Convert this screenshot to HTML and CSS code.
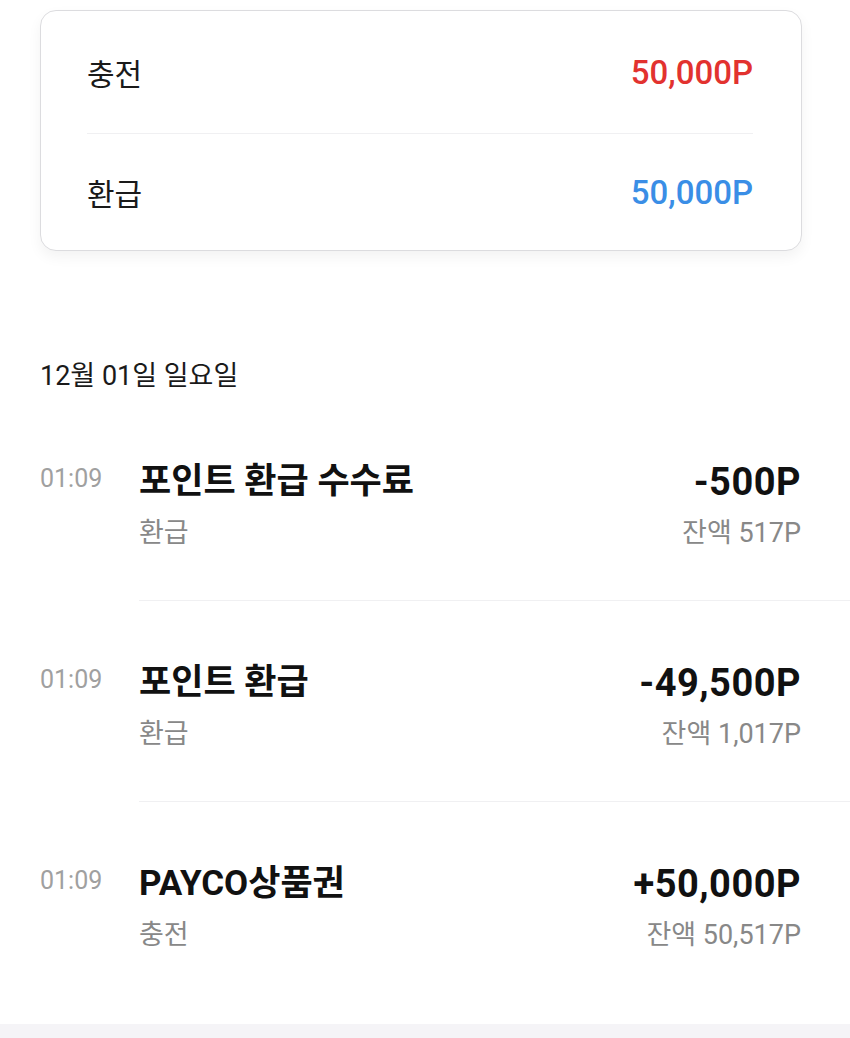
FILE: index.html
```html
<!DOCTYPE html>
<html lang="ko">
<head>
    <meta charset="UTF-8">
    <meta name="viewport" content="width=device-width, initial-scale=1.0">
    <title>포인트 내역</title>
    <link rel="stylesheet" href="styles.css">
</head>
<body>
    <div class="summary-card">
        <div class="summary-row">
            <span class="summary-label">충전</span>
            <span class="summary-amount charge">50,000P</span>
        </div>
        <div class="summary-row">
            <span class="summary-label">환급</span>
            <span class="summary-amount refund">50,000P</span>
        </div>
    </div>

    <div class="history">
        <h2 class="history-date">12월 01일 일요일</h2>

        <div class="history-item">
            <div class="item-time">01:09</div>
            <div class="item-body">
                <div class="item-info">
                    <div class="item-title">포인트 환급 수수료</div>
                    <div class="item-type">환급</div>
                </div>
                <div class="item-values">
                    <div class="item-amount">-500P</div>
                    <div class="item-balance">잔액 517P</div>
                </div>
            </div>
        </div>

        <div class="history-item">
            <div class="item-time">01:09</div>
            <div class="item-body">
                <div class="item-info">
                    <div class="item-title">포인트 환급</div>
                    <div class="item-type">환급</div>
                </div>
                <div class="item-values">
                    <div class="item-amount">-49,500P</div>
                    <div class="item-balance">잔액 1,017P</div>
                </div>
            </div>
        </div>

        <div class="history-item">
            <div class="item-time">01:09</div>
            <div class="item-body">
                <div class="item-info">
                    <div class="item-title">PAYCO상품권</div>
                    <div class="item-type">충전</div>
                </div>
                <div class="item-values">
                    <div class="item-amount">+50,000P</div>
                    <div class="item-balance">잔액 50,517P</div>
                </div>
            </div>
        </div>
    </div>

    <div class="page-bottom"></div>
</body>
</html>
```

FILE: styles.css
```css
body {
    margin: 0;
    font-family: Roboto, "Noto Sans CJK KR", sans-serif;
    background-color: #fff;
    color: #111;
}

.summary-card {
    width: 762px;
    box-sizing: border-box;
    margin: 10px 0 0 40px;
    padding: 0 48px 0 46px;
    background-color: #fff;
    border: 1px solid #dcdcdf;
    border-radius: 16px;
    box-shadow: 0 6px 14px rgba(0, 0, 0, 0.05);
}

.summary-row {
    display: flex;
    align-items: center;
    justify-content: space-between;
    height: 122px;
}

.summary-row + .summary-row {
    height: 116px;
    border-top: 1px solid #f0f0f2;
}

.summary-label {
    font-size: 30px;
    color: #1a1a1a;
}

.summary-amount {
    font-size: 33px;
    font-weight: 500;
}

.summary-amount.charge {
    color: #e2322f;
}

.summary-amount.refund {
    color: #3a8ee6;
}

.history {
    padding-top: 107px;
}

.history-date {
    margin: 0 0 6px 40px;
    font-size: 27px;
    font-weight: 400;
    line-height: 36px;
    color: #1a1a1a;
}

.history-item {
    display: flex;
    align-items: flex-start;
    padding-left: 40px;
}

.item-time {
    width: 99px;
    flex-shrink: 0;
    padding-top: 60px;
    font-size: 25px;
    line-height: 38px;
    color: #a0a0a0;
}

.item-body {
    flex-grow: 1;
    display: flex;
    justify-content: space-between;
    padding: 60px 49px 49px 0;
    border-bottom: 1px solid #f0f0f2;
}

.history-item:last-child .item-body {
    border-bottom: none;
    padding-bottom: 71px;
}

.item-title {
    font-size: 35px;
    font-weight: 700;
    line-height: 44px;
}

.item-amount {
    font-size: 38px;
    font-weight: 700;
    line-height: 44px;
    letter-spacing: 0.5px;
}

.item-values {
    text-align: right;
}

.item-type,
.item-balance {
    margin-top: 11px;
    font-size: 27px;
    line-height: 36px;
    color: #888;
}

.page-bottom {
    height: 40px;
    background-color: #f5f4f7;
}
```
